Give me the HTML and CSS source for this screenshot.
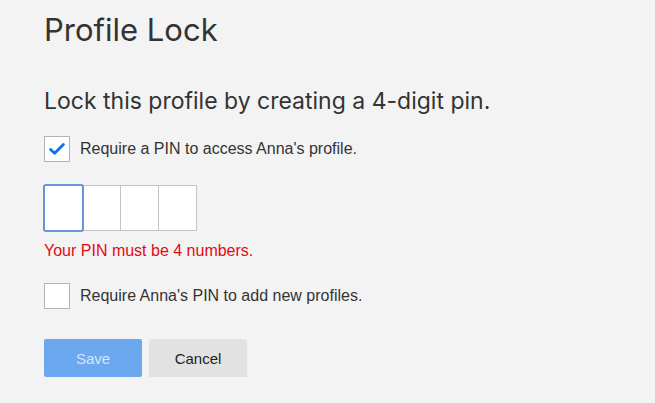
FILE: index.html
```html
<!DOCTYPE html>
<html lang="en">
<head>
<meta charset="utf-8">
<title>Profile Lock</title>
<link rel="stylesheet" href="styles.css">
</head>
<body>
<main class="page">
  <h1 class="title">Profile Lock</h1>
  <h2 class="subtitle">Lock this profile by creating a 4-digit pin.</h2>

  <label class="check-row">
    <span class="checkbox">
      <svg class="check-icon" viewBox="0 0 16 16" width="16" height="16" aria-hidden="true">
        <path d="M1.6 8.4 L5.6 12.2 L14.4 3.4" fill="none" stroke="#0f72e5" stroke-width="2.8" stroke-linecap="round" stroke-linejoin="round"/>
      </svg>
    </span>
    <span class="check-label">Require a PIN to access Anna's profile.</span>
  </label>

  <div class="pin-row">
    <span class="pin-box pin-focused"></span>
    <span class="pin-box"></span>
    <span class="pin-box"></span>
    <span class="pin-box"></span>
  </div>
  <p class="error">Your PIN must be 4 numbers.</p>

  <label class="check-row check-row-second">
    <span class="checkbox"></span>
    <span class="check-label">Require Anna's PIN to add new profiles.</span>
  </label>

  <div class="actions">
    <button class="btn btn-save" type="button">Save</button>
    <button class="btn btn-cancel" type="button">Cancel</button>
  </div>
</main>
</body>
</html>
```
FILE: styles.css
```css
html, body {
  margin: 0;
  padding: 0;
  background: #f3f3f3;
}
body {
  font-family: "Liberation Sans", Arial, sans-serif;
  color: #333;
}
.page {
  padding: 10px 0 0 44px;
  display: flex;
  flex-direction: column;
  align-items: flex-start;
}
.title {
  margin: 0;
  font-family: Inter, Roboto, sans-serif;
  font-weight: 400;
  font-size: 31px;
  line-height: 40px;
  color: #333;
}
.subtitle {
  margin: 36px 0 0;
  font-family: Inter, Roboto, sans-serif;
  font-weight: 400;
  font-size: 23px;
  line-height: 30px;
  color: #333;
}
.check-row {
  display: flex;
  align-items: center;
  gap: 10px;
  margin-top: 20px;
}
.check-row-second {
  margin-top: 22px;
}
.checkbox {
  width: 24px;
  height: 24px;
  border: 1px solid #b3b3b3;
  background: #fff;
  display: flex;
  align-items: center;
  justify-content: center;
}
.check-label {
  font-size: 16px;
  line-height: 20px;
  color: #333;
}
.pin-row {
  display: flex;
  margin-top: 23px;
  position: relative;
}
.pin-box {
  width: 37px;
  height: 44px;
  border: 1px solid #c4c4c4;
  border-left: none;
  background: #fff;
}
.pin-box:first-child {
  border-left: 1px solid #c4c4c4;
}
.pin-focused {
  position: relative;
}
.pin-focused::after {
  content: "";
  position: absolute;
  left: -2px;
  top: -2px;
  right: -2px;
  bottom: -2px;
  border: 2px solid #6b93dc;
  border-radius: 3px;
}
.error {
  margin: 10px 0 0;
  font-size: 16px;
  line-height: 20px;
  color: #e50914;
}
.actions {
  display: flex;
  gap: 7px;
  margin-top: 30px;
}
.btn {
  width: 98px;
  height: 38px;
  border: none;
  border-radius: 2px;
  font-family: "Liberation Sans", Arial, sans-serif;
  font-size: 15px;
  padding: 0;
}
.btn-save {
  background: #6ca8ef;
  color: #d6e6fa;
}
.btn-cancel {
  background: #e2e2e2;
  color: #222;
  box-shadow: 0 1px 1px rgba(0, 0, 0, 0.12);
}
```
